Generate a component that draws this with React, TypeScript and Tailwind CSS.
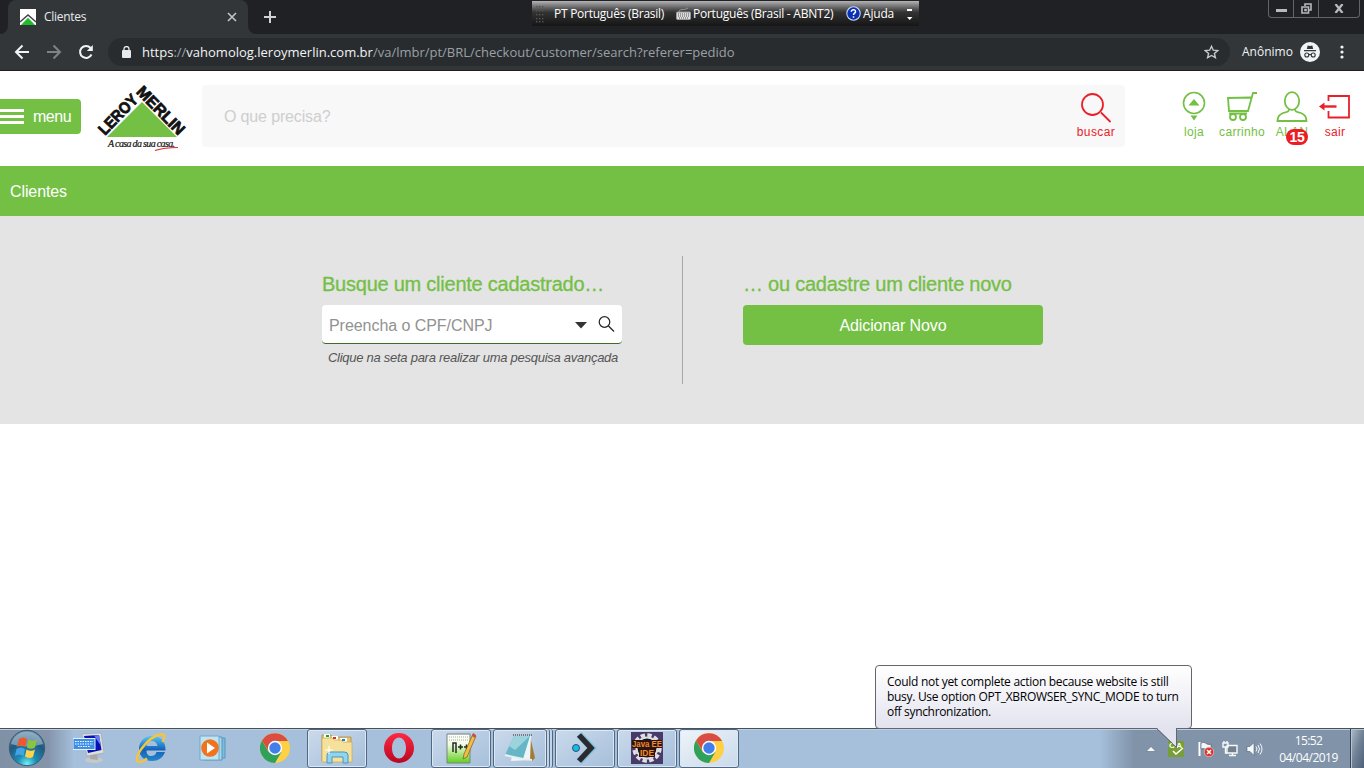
import React from "react";

const ui = "font-['Open_Sans','Noto_Sans',sans-serif]";

function TabStrip() {
  return (
    <div className="relative flex h-[34px] bg-[#202124]">
      <div className="flex h-full w-2 flex-col bg-[#323639]">
        <div className="h-full rounded-br-lg bg-[#202124]" />
      </div>
      <div className="flex h-full w-60 items-center rounded-t-lg bg-[#323639] pl-3 pr-[11px]">
        <svg width="16" height="16" viewBox="0 0 16 16">
          <path d="M0 0H16V16H0Z" fill="#fff" />
          <path d="M0 13L8 6L16 13" fill="none" stroke="#46404c" strokeWidth="1.4" />
          <path d="M1 16L8 8.8L15 16Z" fill="#1fbd2d" />
        </svg>
        <span className="ml-2 flex-1 text-[12px] leading-4 tracking-[-0.3px] text-[#e8eaed]">Clientes</span>
        <svg width="10" height="10" viewBox="0 0 10 10" stroke="#c4c7ca" strokeWidth="1.6">
          <path d="M1 1L9 9M9 1L1 9" />
        </svg>
      </div>
      <div className="flex h-full w-2 flex-col bg-[#323639]">
        <div className="h-full rounded-bl-lg bg-[#202124]" />
      </div>
      <svg className="ml-2 mt-[11px]" width="12" height="12" viewBox="0 0 12 12" stroke="#d0d2d5" strokeWidth="2">
        <path d="M0 6H12M6 0V12" />
      </svg>

      <div className="absolute left-[532px] top-px flex h-[25px] w-[387px] items-center bg-linear-to-b from-[#b4b4b6] via-[#333] via-45% to-[#161616] pl-1 text-[12px] text-white">
        <svg width="8" height="18" viewBox="0 0 8 18" fill="#555">
          {[0, 3, 6].map((x) => [1, 5, 9, 13, 16].map((y) => <rect key={`${x}-${y}`} x={x} y={y} width="1.4" height="1.4" />))}
        </svg>
        <span className="ml-2.5 w-[122px] whitespace-nowrap tracking-[-0.26px]">PT Português (Brasil)</span>
        <svg width="15" height="13" viewBox="0 0 15 13">
          <path d="M3 5C3 1 8 4 12 1" fill="none" stroke="#999" />
          <rect x=".5" y="5" width="14" height="7.5" rx="1" fill="#ddd" stroke="#999" />
          <path d="M2 7H13M2 9H13M3 11H12" stroke="#555" strokeDasharray="1 1" />
        </svg>
        <span className="ml-0.5 w-[153px] whitespace-nowrap tracking-[-0.24px]">Português (Brasil - ABNT2)</span>
        <svg width="15" height="15" viewBox="0 0 15 15">
          <circle cx="7.5" cy="7.5" r="6.7" fill="#0730b5" stroke="#c9d2f5" strokeWidth="1.1" />
          <path d="M5.3 5.7C5.5 3 9.8 3.2 9.5 5.8C9.3 7.3 7.5 7 7.5 9M7.5 10.2V11.8" fill="none" stroke="#fff" strokeWidth="1.5" />
        </svg>
        <span className="ml-0.5 w-[43px] tracking-[-0.2px]">Ajuda</span>
        <svg width="8" height="14" viewBox="0 0 8 14" fill="#fff">
          <path d="M1 2H6V4H1ZM1 10H6.5L3.7 13Z" />
        </svg>
      </div>

      <div className="absolute right-1 top-0 flex h-[18px] w-[92px] rounded-b border border-t-0 border-[#626467]">
        <div className="flex w-[25px] justify-center border-r border-[#626467]">
          <svg className="mt-[9px]" width="11" height="4"><path d="M0 0H11V3H0Z" fill="#b7b9bb" /></svg>
        </div>
        <div className="flex w-[25px] justify-center border-r border-[#626467]">
          <svg className="mt-[3px]" width="11" height="11" viewBox="0 0 11 11" fill="none" stroke="#b7b9bb" strokeWidth="1.6">
            <path d="M4 3V1H10V7H8M1 4H7.5V10H1ZM4 6.5H5V7.5H4Z" />
          </svg>
        </div>
        <div className="flex flex-1 justify-center">
          <svg className="mt-1" width="10" height="9" viewBox="0 0 10 9" stroke="#b7b9bb" strokeWidth="2.3">
            <path d="M1.5 0L8.5 9M8.5 0L1.5 9" />
          </svg>
        </div>
      </div>
    </div>
  );
}

function AddressBar() {
  return (
    <div className="flex h-9 items-center bg-[#323639] pl-[14px]">
      <svg width="16" height="16" viewBox="0 0 16 16" fill="none" stroke="#f1f3f4" strokeWidth="2">
        <path d="M15 8H2M8.5 1.5L2 8L8.5 14.5" />
      </svg>
      <svg className="ml-4" width="16" height="16" viewBox="0 0 16 16" fill="none" stroke="#7f8386" strokeWidth="2">
        <path d="M1 8H14M7.5 1.5L14 8L7.5 14.5" />
      </svg>
      <svg className="ml-4" width="16" height="16" viewBox="0 0 16 16" fill="none" stroke="#f1f3f4" strokeWidth="2">
        <path d="M13.5 10.5A6 6 0 1 1 12.6 4" />
        <path d="M14.8 1V7H8.8Z" fill="#f1f3f4" stroke="none" />
      </svg>
      <div className="ml-[14px] flex h-7 w-[1122px] items-center rounded-full bg-[#282c2f] pl-3.5 pr-[11px]">
        <svg width="9" height="12" viewBox="0 0 9 12">
          <path d="M2 5V3A2.5 2.5 0 0 1 7 3V5" fill="none" stroke="#e8eaed" strokeWidth="1.3" />
          <rect y="4" width="9" height="8" rx="1" fill="#e8eaed" />
        </svg>
        <span className="ml-[11px] flex-1 whitespace-nowrap text-[13px] leading-5 text-[#9aa0a6]">
          <span className="text-[#f1f3f4]">https</span>://<span className="text-[#f1f3f4]">vahomolog.leroymerlin.com.br</span>/va/lmbr/pt/BRL/checkout/customer/search?referer=pedido
        </span>
        <svg width="15" height="14" viewBox="0 0 15 14" fill="none" stroke="#c6c9cc" strokeWidth="1.4">
          <path d="M7.5 1.3L9.3 5.2L13.7 5.6L10.4 8.5L11.4 12.7L7.5 10.5L3.6 12.7L4.6 8.5L1.3 5.6L5.7 5.2Z" />
        </svg>
      </div>
      <span className="ml-[12px] w-[58px] whitespace-nowrap text-[12px] text-[#f1f3f4]">Anônimo</span>
      <svg width="20" height="20" viewBox="0 0 20 20">
        <circle cx="10" cy="10" r="10" fill="#f1f3f4" />
        <path d="M6.8 7L7.7 3.5L10 4.1L12.3 3.5L13.2 7ZM4 8H16V9.3H4Z" fill="#323639" />
        <g fill="none" stroke="#323639" strokeWidth="1.1"><circle cx="6.8" cy="13" r="2" /><circle cx="13.2" cy="13" r="2" /><path d="M8.8 12.7Q10 12 11.2 12.7" /></g>
      </svg>
      <svg className="ml-5" width="4" height="14" viewBox="0 0 4 14" fill="#f1f3f4">
        <circle cx="2" cy="2" r="1.6" /><circle cx="2" cy="7" r="1.6" /><circle cx="2" cy="12" r="1.6" />
      </svg>
    </div>
  );
}

function Logo() {
  return (
    <svg className="ml-1" width="115" height="90" viewBox="85 71 115 90">
      <path d="M142 102L177 137H107Z" fill="#73c044" />
      <g fontFamily="Liberation Sans" fontWeight="700" fontSize="16" fill="#111" stroke="#111" strokeWidth=".8">
        <text transform="translate(105 136) rotate(-46)" textLength="49" lengthAdjust="spacingAndGlyphs">LEROY</text>
        <text transform="translate(135.500 92.500) rotate(45.500)" textLength="61" lengthAdjust="spacingAndGlyphs">MERLIN</text>
      </g>
      <text x="108" y="147" fontFamily="Liberation Serif" fontStyle="italic" fontSize="10" textLength="67" fill="#111" stroke="#111" strokeWidth=".2">A casa da sua casa.</text>
      <path d="M155 150.500Q164 147.500 178 147.500" fill="none" stroke="#e0232b" strokeWidth="1.2" />
    </svg>
  );
}

function SiteHeader() {
  const label = "text-[12px] leading-[14px]";
  return (
    <header className="flex h-[95px] bg-white">
      <button className="mt-7 flex h-[35px] w-[81px] items-center rounded-r bg-[#73c044] text-base text-white">
        <svg width="24" height="16" fill="#fff"><path d="M0 0H24V3H0ZM0 6H24V9H0ZM0 12H24V15H0Z" /></svg>
        <span className="ml-[9px] tracking-[-0.5px]">menu</span>
      </button>
      <Logo />
      <div className="ml-0.5 mt-[14px] flex h-[62px] w-[923px] items-center rounded bg-[#f8f8f8] pl-[22px] text-[#cecece]">
        <span className="flex-1 pt-0.5 text-base tracking-[-0.15px]">O que precisa?</span>
        <div className="flex w-[58px] flex-col items-center text-[#e9202a]">
          <svg width="32" height="31" viewBox="0 0 32 31" fill="none" stroke="#e9202a" strokeWidth="1.8">
            <circle cx="12.500" cy="11.500" r="10.500" /><path d="M21 19.500L30.500 29" />
          </svg>
          <span className={`${label} mt-px tracking-[0.4px]`}>buscar</span>
        </div>
      </div>
      <nav className="ml-[44px] mt-5 flex text-[#73c044]">
        <div className="flex w-[50px] flex-col items-center">
          <svg width="24" height="32" viewBox="0 0 24 32" fill="none" stroke="#73c044" strokeWidth="1.6">
            <circle cx="12" cy="12" r="10.500" /><path d="M12 8L17.500 14.500H6.500ZM8.500 24.500H15.500L12 29.500Z" fill="#73c044" stroke="none" />
          </svg>
          <span className={`${label} mt-0.5 tracking-[0.3px]`}>loja</span>
        </div>
        <div className="flex w-[46px] flex-col items-center">
          <svg width="32" height="32" viewBox="0 0 32 32" fill="none" stroke="#73c044" strokeWidth="1.8">
            <path d="M31 2H27L22 20H3L2 7L25 6.500M3 22.500H21" /><circle cx="7" cy="26" r="3" /><circle cx="17" cy="26" r="3" />
          </svg>
          <span className={`${label} mt-0.5 tracking-[0.3px]`}>carrinho</span>
        </div>
        <div className="relative flex w-[54px] flex-col items-center">
          <svg width="32" height="32" viewBox="0 0 32 32" fill="none" stroke="#73c044" strokeWidth="1.8">
            <ellipse cx="16" cy="10" rx="7.200" ry="8.800" /><path d="M13 18C13 21 11 21 7 22C3 23.500 1.500 26 1.500 30H30.500C30.500 26 29 23.500 25 22C21 21 19 21 19 18" />
          </svg>
          <span className={`${label} mt-0.5 tracking-[0.3px]`}>ALAN</span>
          <span className="absolute left-[21px] top-[38px] flex h-4 w-[22px] items-center justify-center rounded-full bg-[#ed1c24] text-[14px] font-bold tracking-[-0.3px] text-white">15</span>
        </div>
        <div className="flex w-8 flex-col items-center text-[#e9202a]">
          <svg width="32" height="32" viewBox="0 0 32 32" fill="none" stroke="#e9202a" strokeWidth="1.8">
            <path d="M9.500 10V5H30V26.500H9.500V20" /><path d="M17.500 15.500H4" strokeWidth="2.400" /><path d="M0 15.500L5.500 11.500V19.500Z" fill="#e9202a" stroke="none" />
          </svg>
          <span className={`${label} mt-0.5 tracking-[0.3px]`}>sair</span>
        </div>
      </nav>
    </header>
  );
}

function CustomerSearch() {
  return (
    <>
      <div className="flex h-[50px] items-center bg-[#73c044] pl-2.5 pt-0.5 text-base tracking-[-0.1px] text-white">Clientes</div>
      <main className="flex h-[208px] bg-[#e4e4e4] pl-[322px] pt-10">
        <section className="w-[360px] pt-4">
          <h2 className="h-[33px] whitespace-nowrap text-[20px] leading-6 tracking-[-0.24px] text-[#73c044] [-webkit-text-stroke:0.3px_#73c044]">Busque um cliente cadastrado…</h2>
          <div className="flex h-[39px] w-[300px] items-center rounded border-b border-[#3c6e28] bg-white pl-[7px] text-[#929292]">
            <span className="w-[246px] pt-[3px] text-base tracking-[-0.05px]">Preencha o CPF/CNPJ</span>
            <svg className="mt-0.5" width="12" height="7"><path d="M0 0H12L6 6.500Z" fill="#333" /></svg>
            <svg className="ml-[11px]" width="17" height="17" viewBox="0 0 17 17" fill="none" stroke="#222" strokeWidth="1.200">
              <circle cx="6.500" cy="6" r="5.300" /><path d="M10.500 10L16 15.500" />
            </svg>
          </div>
          <p className="ml-1.5 mt-1.5 whitespace-nowrap text-[13px] italic leading-4 tracking-[-0.27px] text-[#555]">Clique na seta para realizar uma pesquisa avançada</p>
        </section>
        <div className="h-32 w-px bg-[#a6a6a6]" />
        <section className="ml-[60px] w-[300px] pt-4">
          <h2 className="h-[33px] whitespace-nowrap text-[20px] leading-6 tracking-[-0.24px] text-[#73c044] [-webkit-text-stroke:0.3px_#73c044]">… ou cadastre um cliente novo</h2>
          <button className="h-10 w-full rounded bg-[#73c044] pt-0.5 text-base tracking-[-0.1px] text-white">Adicionar Novo</button>
        </section>
      </main>
    </>
  );
}

function ChromeIcon() {
  return (
    <svg width="30" height="30" viewBox="0 0 30 30">
      <circle cx="15" cy="15" r="15" fill="#fdd045" />
      <path d="M2 7.500A15 15 0 0 0 15 30L21.500 18.700L8.500 18.700Z" fill="#2fa15b" />
      <path d="M2 7.500L9 19L15 8H28A15 15 0 0 0 2 7.500Z" fill="#d94d43" />
      <circle cx="15" cy="15" r="7.200" fill="#fff" /><circle cx="15" cy="15" r="5.700" fill="#437fe8" />
    </svg>
  );
}

function KeyboardIcon() {
  return (
    <svg width="32" height="32" viewBox="0 0 32 32">
      <ellipse cx="21" cy="28" rx="9" ry="3" fill="#c7c9c9" />
      <path d="M17 20L24 22L25 28L17 27Z" fill="#a9aaaa" />
      <path d="M9 2L28 1L31 21L14 24Z" fill="#dedfdb" stroke="#999" strokeWidth=".5" />
      <path d="M11 4L26 3L28.500 18L15 21Z" fill="#0610b4" /><path d="M21 3.500L26 3L28 14Z" fill="#647df1" />
      <rect x="0" y="6.500" width="22" height="11" fill="#3e8fe8" stroke="#e1f1ff" />
      <path d="M2 9.500H20M2 12H20M5 14.500H17" stroke="#fff" strokeWidth="1.200" strokeDasharray="1.500 1" />
    </svg>
  );
}

function IeIcon() {
  return (
    <svg width="32" height="32" viewBox="0 0 32 32">
      <defs><linearGradient id="ie" x2="0" y2="1"><stop stopColor="#58c6f2" /><stop offset=".55" stopColor="#1461b8" /><stop offset="1" stopColor="#2587cb" /></linearGradient></defs>
      <path fill="url(#ie)" fillRule="evenodd" d="M17 4C9 4 4 10 4 17C4 24 9 29 17 29C23 29 28 26 30 20H21.500C20.500 23 18.500 24 16.500 24C13 24 11.500 22 11.500 18.500H30.500C31 10 26 4 17 4ZM11.500 14C12 11 14 9 17 9C20 9 22 11 22.500 14Z" />
      <path d="M27.500 10C31 3 29 1 23 3C14 6 2 20 2 27C2 32 8 30 12 26.500" fill="none" stroke="#f3c53b" strokeWidth="2.500" />
    </svg>
  );
}

function MediaIcon() {
  return (
    <svg width="28" height="28" viewBox="0 0 28 28">
      <path d="M9 4H26V24H9Z" fill="#7dbbd8" stroke="#5698bd" /><path d="M5 3H23V26H5Z" fill="#a8d7ec" stroke="#5698bd" /><path d="M1 2H20V26H1Z" fill="#c2e3f1" stroke="#6caacd" />
      <circle cx="11" cy="14" r="8.800" fill="#ef741d" /><path d="M8 8.500L16 14L8 19.500Z" fill="#fff" />
    </svg>
  );
}

function ExplorerIcon() {
  return (
    <svg width="32" height="32" viewBox="0 0 32 32">
      <path d="M1 3H10L12 5H30V29H1Z" fill="#e4c36b" stroke="#a98433" strokeWidth=".7" />
      <path d="M3 2H9V6H3ZM11 4H17V8H11ZM19 6H26V10H19Z" fill="#fff" />
      <path d="M5 3H8V5H5Z" fill="#12a92c" /><path d="M12 5H15V7H12Z" fill="#cf352d" /><path d="M21 7H24V9H21Z" fill="#2181cd" />
      <path d="M1 6H11L13 8H20L22 10H31V30H1Z" fill="#f6e19a" stroke="#c9a850" strokeWidth=".7" />
      <path d="M6 31V23Q6 20 10 20H23Q27 20 27 23V31H22V25H11V31Z" fill="#91d4ed" stroke="#4697c1" />
      <path d="M8 14V22M4 18H12" stroke="#fff" strokeWidth="1.200" />
    </svg>
  );
}

function OperaIcon() {
  return (
    <svg width="30" height="30" viewBox="0 0 30 30">
      <defs><linearGradient id="op" x2="0" y2="1"><stop stopColor="#ff2940" /><stop offset="1" stopColor="#b80722" /></linearGradient></defs>
      <path fill="url(#op)" fillRule="evenodd" d="M15 0A15 15 0 1 0 15 30A15 15 0 1 0 15 0ZM15 4.500C19 4.500 22 9 22 15S19 25.500 15 25.500S8 21 8 15S11 4.500 15 4.500Z" />
    </svg>
  );
}

function NotepadPlusIcon() {
  return (
    <svg width="32" height="32" viewBox="0 0 32 32">
      <defs><linearGradient id="np" x2="0" y2="1"><stop stopColor="#fff" /><stop offset=".35" stopColor="#f4fce5" /><stop offset="1" stopColor="#60cf20" /></linearGradient></defs>
      <path d="M2 2H25V31H2Z" fill="url(#np)" stroke="#788476" />
      <path d="M3 2H25M4 5H24M4 8H24" stroke="#a2a7a2" strokeDasharray="1 1" />
      <path d="M8 20V11H11V21M13 15H18M15.500 12.500V17.500M19 15H24M21.500 12.500V17.500" fill="none" stroke="#252a22" strokeWidth="1.500" />
      <path d="M28 2L31 4L22 25L18 27L19 22Z" fill="#f2bd45" stroke="#82571d" strokeWidth=".7" /><path d="M28 1L31 3L30 6L27 4Z" fill="#cd4c49" />
    </svg>
  );
}

function NotepadIcon() {
  return (
    <svg width="32" height="32" viewBox="0 0 32 32">
      <path d="M26 4L31 26L28 29L20 27Z" fill="#a57a35" />
      <path d="M11 4L27 4L26 28L7 29Z" fill="#edf6f8" />
      <path d="M10 4L26 4L19 27L1 23Z" fill="#66b6c7" /><path d="M10 4L26 4L11 18L5 14Z" fill="#9cd3dc" />
      <path d="M9 3H28" stroke="#777" strokeWidth="2" strokeDasharray="1 1" /><path d="M1 23L19 27L28 28" fill="none" stroke="#e6f0ef" strokeWidth="2" />
    </svg>
  );
}

function ArrowIcon() {
  return (
    <svg width="32" height="32" viewBox="0 0 32 32">
      <path d="M10 2.500L23 16L10 29.500" fill="none" stroke="#54b5dc" strokeWidth="7" opacity=".5" />
      <path d="M10 3L22 16L10 29" fill="none" stroke="#292b2e" strokeWidth="5.500" />
      <circle cx="7" cy="16" r="3.500" fill="#18b8ea" stroke="#24556b" />
    </svg>
  );
}

function JavaIcon() {
  return (
    <svg width="32" height="32" viewBox="0 0 32 32">
      <rect width="32" height="32" fill="#483b68" />
      <circle cx="16" cy="16" r="13" fill="none" stroke="#dedee3" strokeWidth="3.500" strokeDasharray="4.400 2.400" />
      <circle cx="16" cy="16" r="10.500" fill="#16121b" stroke="#dedee3" strokeWidth="2" />
      <path d="M1 8H31V16H24V25H8V16H1Z" fill="#2c1511" />
      <g fill="#f28b2b" fontFamily="Liberation Sans" fontWeight="700" fontSize="8.500">
        <text x="1" y="15" textLength="30" lengthAdjust="spacingAndGlyphs">Java EE</text><text x="9" y="24" textLength="14" lengthAdjust="spacingAndGlyphs">IDE</text>
      </g>
    </svg>
  );
}

function StartIcon() {
  return (
    <svg width="38" height="38" viewBox="0 0 38 38">
      <defs><radialGradient id="orb" cx=".5" cy=".95" r=".9"><stop stopColor="#6ff1f4" /><stop offset=".3" stopColor="#1c8db5" /><stop offset=".7" stopColor="#22587f" /><stop offset="1" stopColor="#5d819f" /></radialGradient></defs>
      <circle cx="19" cy="19" r="17.700" fill="url(#orb)" stroke="#3b5e77" />
      <path d="M3 15A16.500 16.500 0 0 1 35 15Q18 20 3 15Z" fill="#c3d8e4" opacity=".5" />
      <path d="M11 10Q15 7 19 10L17.500 18Q13 15 9 18Z" fill="#ed592d" /><path d="M20.500 10.500Q25 13 29 10.500L27 18.500Q23 21 19 18.500Z" fill="#8cc43b" />
      <path d="M8.500 20Q13 17 17 20L15.500 27Q11 24 7 27Z" fill="#42a4e4" /><path d="M18.500 20.500Q23 23 27 20.500L25 28Q21 30 17 27.500Z" fill="#ffd247" />
    </svg>
  );
}

function Taskbar() {
  const items = [
    { icon: <KeyboardIcon />, open: false },
    { icon: <IeIcon />, open: false },
    { icon: <MediaIcon />, open: false },
    { icon: <ChromeIcon />, open: false },
    { icon: <ExplorerIcon />, open: true },
    { icon: <OperaIcon />, open: false },
    { icon: <NotepadPlusIcon />, open: true },
    { icon: <NotepadIcon />, open: true, stacked: true },
    { icon: <ArrowIcon />, open: true },
    { icon: <JavaIcon />, open: true },
    { icon: <ChromeIcon />, open: true, active: true },
  ];
  return (
    <footer className="relative flex h-10 border-t border-[#48505b] bg-[linear-gradient(90deg,#8091a6_0,#8495ab_48px,#a6bfdb_74px,#a6bfdb_1100px,#8093a9_1134px,#8093a9_100%)] shadow-[inset_0_1px_#bfd0e3]">
      <div className="w-[58px] pl-2"><StartIcon /></div>
      {items.map((item, i) => (
        <div key={i} className="flex w-[62px] px-px">
          <div className={`flex h-[39px] items-center justify-center pb-0.5 ${item.stacked ? "w-[54px]" : "w-[60px]"} ${item.open ? "rounded-[3px] border border-[#526780] shadow-[inset_0_0_0_1px_#dce8f5]" : ""} ${item.active ? "bg-linear-to-br from-[#eef4fa] to-[#c9d9ea]" : item.open ? "bg-linear-to-br from-[#cbdaeb] via-[#b7cce3] to-[#a7bfda]" : ""}`}>
            {item.icon}
          </div>
          {item.stacked && <><div className="h-[39px] w-[3px] rounded-r border-r border-[#526780] bg-[#c4d5e8]" /><div className="h-[39px] w-[3px] rounded-r border-r border-[#526780] bg-[#c4d5e8]" /></>}
        </div>
      ))}
      <div className="ml-auto flex w-[218px] items-center text-white">
        <svg width="10" height="6"><path d="M0 5.500L5 .5L10 5.500Z" fill="#f6f8fa" stroke="#596b80" strokeWidth=".6" /></svg>
        <svg className="ml-3" width="16" height="16" viewBox="0 0 16 16">
          <rect width="16" height="16" fill="#779f35" /><text x="1" y="6.500" fill="#fff" fontFamily="Liberation Sans" fontWeight="700" fontSize="8" textLength="13">CA</text><path d="M5 10L8 13L15 7" fill="none" stroke="#fff" strokeWidth="1.600" />
        </svg>
        <svg className="ml-3.5" width="16" height="16" viewBox="0 0 16 16">
          <path d="M1.500 1V15" stroke="#fff" strokeWidth="2" /><path d="M3 2Q6 0 9 3Q11 4 13 3V10Q9 11 7 8Q5 7 3 8Z" fill="#f4f7fa" stroke="#43556a" strokeWidth=".6" />
          <circle cx="11" cy="11" r="4.800" fill="#d5372f" stroke="#fac9c5" strokeWidth=".7" /><path d="M9 9L13 13M13 9L9 13" stroke="#fff" strokeWidth="1.500" />
        </svg>
        <svg className="ml-2" width="16" height="16" viewBox="0 0 16 16" fill="none" stroke="#f7f9fa" strokeWidth="1.400">
          <path d="M5 4.500H15V12H5Z" fill="#74808e" /><path d="M7 14.500H14M10.500 12V15M1 2H6V6H1ZM2 2V0M5 2V0M3.500 6V12H5" />
        </svg>
        <svg className="ml-2" width="17" height="16" viewBox="0 0 17 16" fill="none" stroke="#f7f9fa">
          <path d="M1 5.500H4L8 1.500V14.500L4 10.500H1Z" fill="#f7f9fa" stroke="#50637a" strokeWidth=".6" /><path d="M10 5.500Q12 8 10 10.500M12 4Q15 8 12 12M14 2.500Q18 8 14 13.500" />
        </svg>
        <div className="ml-3 mt-px flex w-[67px] flex-col items-center text-[12px] leading-[17px]">
          <span className="tracking-[-0.6px]">15:52</span><span className="tracking-[-0.5px]">04/04/2019</span>
        </div>
        <div className="ml-auto h-full w-[14px] border-l border-[#354556] bg-linear-to-br from-[#afbdca] via-[#718296] to-[#4d6077] shadow-[inset_1px_1px_#b7c4d1]" />
      </div>

      <div className="absolute left-[875px] top-[-64px] z-10 h-16 w-[317px] rounded border border-[#65656d] bg-linear-to-b from-white to-[#e3e3ef] pl-[11px] pt-2 text-[12px] leading-[15px] text-black">
        <p className="whitespace-nowrap tracking-[-0.29px]">Could not yet complete action because website is still</p>
        <p className="whitespace-nowrap tracking-[-0.3px]">busy. Use option OPT_XBROWSER_SYNC_MODE to turn</p>
        <p className="whitespace-nowrap tracking-[-0.33px]">off synchronization.</p>
        <svg className="absolute left-[280px] top-[61px]" width="23" height="22" viewBox="0 0 23 22">
          <path d="M0 0L20.500 20V0Z" fill="#e3e3ef" /><path d="M0 1L20.500 20.500V1" fill="none" stroke="#65656d" />
        </svg>
      </div>
    </footer>
  );
}

export default function App() {
  return (
    <div className={`flex h-[768px] w-[1364px] flex-col overflow-hidden bg-white ${ui}`}>
      <TabStrip />
      <AddressBar />
      <div className="h-px bg-[#211b1d]" />
      <div className="flex-1 font-['Liberation_Sans',Arial,sans-serif]">
        <SiteHeader />
        <CustomerSearch />
      </div>
      <Taskbar />
    </div>
  );
}
